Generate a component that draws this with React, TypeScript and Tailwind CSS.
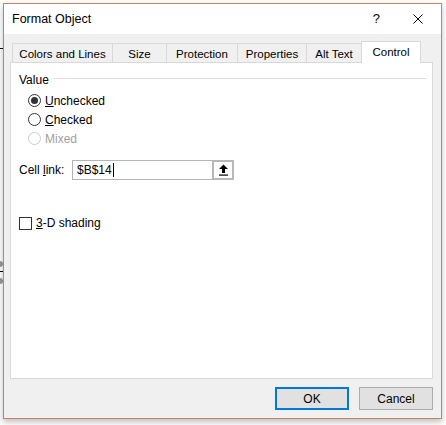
import React from 'react';

const font = { fontFamily: '"Liberation Sans", Arial, sans-serif' };

const tabs = [
  { label: 'Colors and Lines', w: 'w-[100px]' },
  { label: 'Size', w: 'w-[54px]' },
  { label: 'Protection', w: 'w-[71px]' },
  { label: 'Properties', w: 'w-[69px]' },
  { label: 'Alt Text', w: 'w-[55px]' },
];

function Radio({ checked, disabled, children }: { checked?: boolean; disabled?: boolean; children: React.ReactNode }) {
  return (
    <div className="flex h-[19px] items-center gap-[4px]">
      <span
        className={`flex h-[13px] w-[13px] items-center justify-center rounded-full border bg-white ${
          disabled ? 'border-[#cccccc]' : 'border-[#333333]'
        }`}
      >
        {checked && <span className="h-[7px] w-[7px] rounded-full bg-[#333333]" />}
      </span>
      <span className={disabled ? 'text-[#a0a0a0]' : 'text-[#000000]'}>{children}</span>
    </div>
  );
}

export default function App() {
  return (
    <div className="flex h-[425px] w-[446px] bg-white text-[12px] text-black" style={font}>
      {/* bits of the sheet behind the dialog */}
      <div className="w-[3px] shrink-0 pt-[48px]">
        <div className="h-px w-[3px] bg-black" />
        <div className="mt-[212px] h-[6px] w-[3px] rounded-r bg-[#9a9a9a]" />
        <div className="mt-[4px] h-px w-[3px] bg-black" />
        <div className="mt-[6px] h-[6px] w-[3px] rounded-r bg-[#9a9a9a]" />
      </div>

      <div className="mt-[3px] flex h-[416px] w-[439px] flex-col border border-[#c4845e] bg-[#f0f0f0] shadow-[0_3px_6px_rgba(0,0,0,0.25)]">
        <div className="flex h-[30px] items-center bg-white pl-[8px]">
          <span className="text-[12.5px]">Format Object</span>
          <span className="ml-auto text-[13px]">?</span>
          <svg className="ml-[33px] mr-[18px]" width="10" height="10" viewBox="0 0 10 10">
            <path d="M0.5 0.5 L9.5 9.5 M9.5 0.5 L0.5 9.5" stroke="#000" strokeWidth="1" />
          </svg>
        </div>

        <div className="ml-[6px] mr-[8px] mt-[7px] flex flex-col">
          <div className="flex h-[21px] items-end pl-[2px]">
            {tabs.map((t) => (
              <div
                key={t.label}
                className={`flex h-[19px] ${t.w} items-center justify-center border-l border-t border-[#d9d9d9] pt-[3px] text-[11.5px]`}
              >
                {t.label}
              </div>
            ))}
            <div className="relative z-10 -mb-px flex h-[22px] w-[60px] items-center justify-center border border-b-0 border-[#d9d9d9] bg-white pt-[1px] text-[11.5px]">
              Control
            </div>
          </div>

          <div className="h-[317px] border border-[#d9d9d9] bg-white pl-[8px] pr-[6px] pt-[8px]">
            <div className="flex items-center">
              <span>Value</span>
              <div className="ml-[5px] mt-[-3px] h-px flex-1 bg-[#dcdcdc]" />
            </div>
            <div className="ml-[9px] mt-[2px] flex flex-col">
              <Radio checked>
                <u>U</u>nchecked
              </Radio>
              <Radio>
                <u>C</u>hecked
              </Radio>
              <Radio disabled>Mixed</Radio>
            </div>

            <div className="mt-[12px] flex items-center">
              <span className="w-[53px]">
                Cell <u>l</u>ink:
              </span>
              <div className="flex h-[20px] w-[162px] items-center border border-[#b4b4b4]">
                <span className="pl-[4px]">$B$14</span>
                <span className="ml-px h-[14px] w-px bg-black" />
                <div className="-mr-px ml-auto flex h-[20px] w-[22px] items-center justify-center border-2 border-[#b8b8b8] bg-white">
                  <svg width="11" height="12" viewBox="0 0 11 12">
                    <path d="M5.5 0.5 L10 5 L7 5 L7 9 L4 9 L4 5 L1 5 Z" fill="#000" />
                    <rect x="1" y="10.5" width="9" height="1.2" fill="#000" />
                  </svg>
                </div>
              </div>
            </div>

            <div className="mt-[34px] flex items-center gap-[4px]">
              <span className="h-[13px] w-[13px] border border-[#333333] bg-white" />
              <span>
                <u>3</u>-D shading
              </span>
            </div>
          </div>
        </div>

        <div className="mr-[8px] mt-[8px] flex justify-end gap-[10px]">
          <button className="flex h-[23px] w-[74px] items-center justify-center border-2 border-[#0078d7] bg-[#e1e1e1] text-[12px]">
            OK
          </button>
          <button className="flex h-[23px] w-[74px] items-center justify-center border border-[#adadad] bg-[#e1e1e1] text-[12px]">
            Cancel
          </button>
        </div>
      </div>
    </div>
  );
}
